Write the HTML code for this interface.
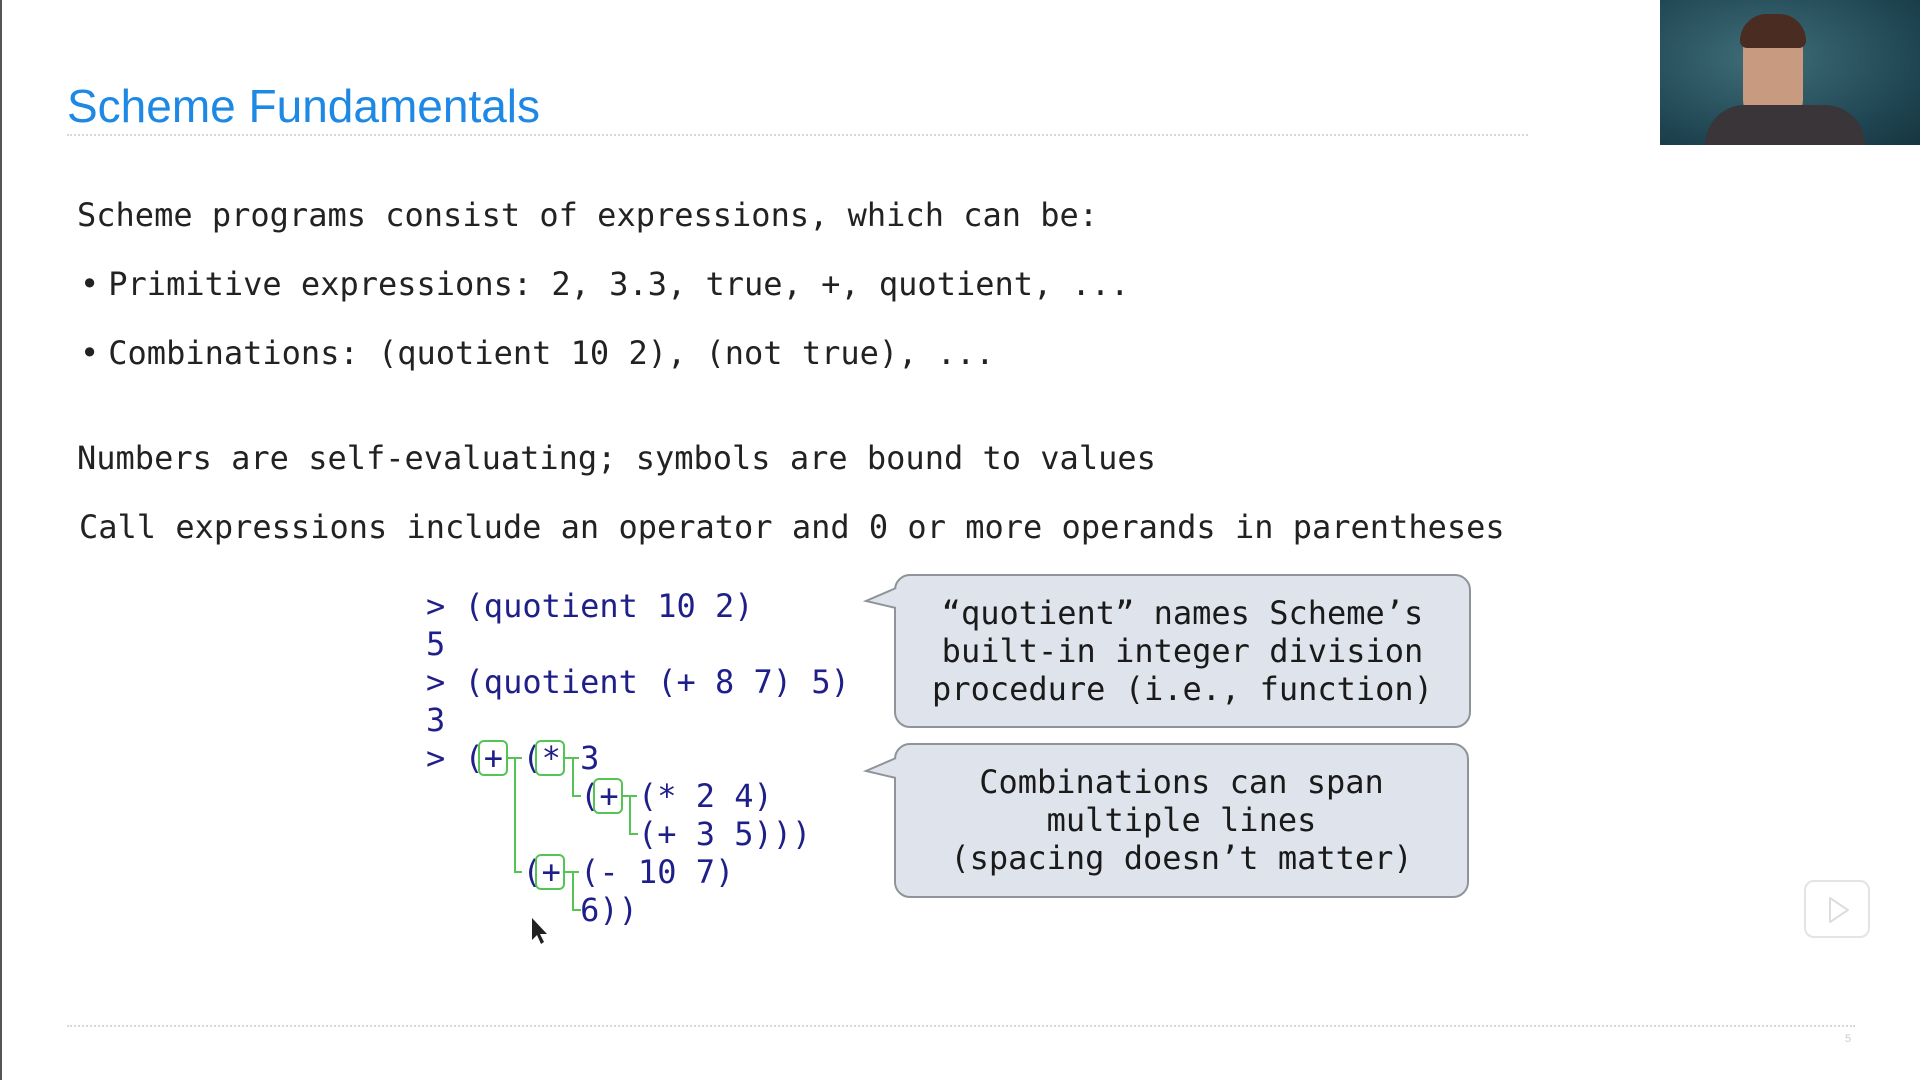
<!DOCTYPE html>
<html><head><meta charset="utf-8"><style>
html,body{margin:0;padding:0;}
body{width:1920px;height:1080px;position:relative;background:#fff;overflow:hidden;font-family:"DejaVu Sans Mono","Liberation Mono",monospace;}
.abs{position:absolute;}
.title{left:67px;top:79px;font-family:"Liberation Sans",sans-serif;font-size:46px;color:#1e88e5;white-space:nowrap;}
.hr{border-top:2px dotted #d8d8d8;}
.t{font-size:32px;color:#222;white-space:pre;line-height:38px;}
.code{left:426px;top:587px;font-size:32px;line-height:38px;color:#1f1f8a;white-space:pre;margin:0;font-family:"DejaVu Sans Mono","Liberation Mono",monospace;}
.cb{background:#dfe4ec;border:2px solid #8e949a;border-radius:16px;box-sizing:border-box;text-align:center;font-size:32px;line-height:38px;color:#1a1a1a;white-space:pre;}
</style></head><body>
<div class="abs" style="left:0;top:0;width:2px;height:1080px;background:#555"></div>
<div class="abs title">Scheme Fundamentals</div>
<div class="abs hr" style="left:67px;top:134px;width:1461px"></div>
<div class="abs" style="left:1660px;top:0;width:260px;height:145px;background:radial-gradient(ellipse at 40% 40%,#3f6e78,#1f4552 70%,#163640);"></div>
<div class="abs" style="left:1743px;top:20px;width:60px;height:100px;border-radius:30px 30px 20px 20px;background:#c89a80"></div>
<div class="abs" style="left:1740px;top:14px;width:66px;height:34px;border-radius:30px 30px 8px 8px;background:#4a2c22"></div>
<div class="abs" style="left:1705px;top:105px;width:160px;height:40px;border-radius:40px 40px 0 0;background:#3a3538"></div>

<div class="abs t" style="left:77px;top:196px">Scheme programs consist of expressions, which can be:</div>
<div class="abs t" style="left:80px;top:265px">•<span style="margin-left:9px">Primitive expressions: 2, 3.3, true, +, quotient, ...</span></div>
<div class="abs t" style="left:80px;top:334px">•<span style="margin-left:9px">Combinations: (quotient 10 2), (not true), ...</span></div>
<div class="abs t" style="left:77px;top:439px">Numbers are self-evaluating; symbols are bound to values</div>
<div class="abs t" style="left:79px;top:508px">Call expressions include an operator and 0 or more operands in parentheses</div>

<pre class="abs code">&gt; (quotient 10 2)
5
&gt; (quotient (+ 8 7) 5)
3
&gt; (+ (* 3
        (+ (* 2 4)
           (+ 3 5)))
     (+ (- 10 7)
        6))</pre>
<svg class="abs" style="left:0;top:0" width="1920" height="1080">
<g fill="none" stroke="#55c455" stroke-width="2">
<rect x="479" y="741" width="28" height="34" rx="5"/>
<rect x="536" y="741" width="28" height="34" rx="5"/>
<rect x="594" y="779" width="28" height="34" rx="5"/>
<rect x="536" y="855" width="28" height="34" rx="5"/>
<path d="M507 758 H522 M515 758 V872 H522"/>
<path d="M564 758 H579 M573 758 V796 H581"/>
<path d="M622 796 H637 M630 796 V834 H638"/>
<path d="M564 872 H579 M573 872 V910 H581"/>
</g>
<path d="M532 918 L532 940 L537 935 L541 944 L544 942 L540 934 L547 934 Z" fill="#222"/>
</svg>

<div class="abs cb" style="left:894px;top:574px;width:577px;height:154px;padding-top:18px">“quotient” names Scheme’s
built-in integer division
procedure (i.e., function)</div>
<div class="abs cb" style="left:894px;top:743px;width:575px;height:155px;padding-top:18px">Combinations can span
multiple lines
(spacing doesn’t matter)</div>
<svg class="abs" style="left:860px;top:580px" width="40" height="200">
<path d="M36 8 L6 21 L36 28" fill="#dfe4ec" stroke="#8e949a" stroke-width="2"/>
<path d="M36 178 L6 191 L36 198" fill="#dfe4ec" stroke="#8e949a" stroke-width="2"/>
</svg>

<div class="abs hr" style="left:67px;top:1025px;width:1788px"></div>
<div class="abs" style="left:1845px;top:1033px;font-family:'Liberation Sans',sans-serif;font-size:11px;color:#ccc">5</div>
<div class="abs" style="left:1804px;top:880px;width:66px;height:58px;border:2px solid #e4e4e4;border-radius:10px;background:#fff;box-sizing:border-box"></div>
<svg class="abs" style="left:1824px;top:895px" width="30" height="30"><path d="M6 3 L24 15 L6 27 Z" fill="none" stroke="#ddd" stroke-width="2" stroke-linejoin="round"/></svg>
</body></html>
